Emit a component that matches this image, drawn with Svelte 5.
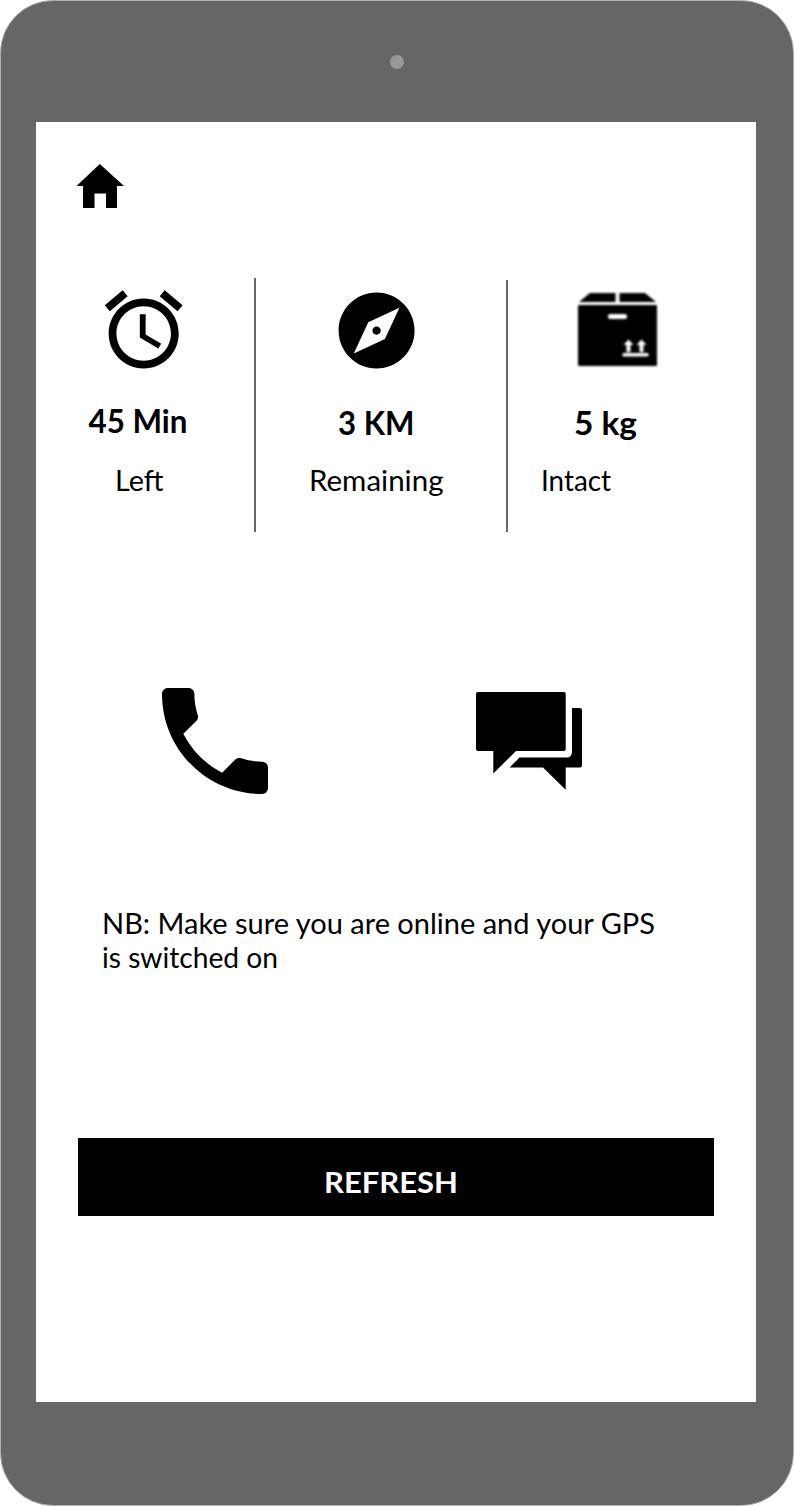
<script>
  const stats = [
    { icon: 'alarm', value: '45 Min', vx: 52.5, vw: 99, vy: 55, label: 'Left', lx: 79, lw: 48.5 },
    { icon: 'compass', value: '3 KM', vx: 82, vw: 76.5, vy: 56.5, label: 'Remaining', lx: 53, lw: 134.5 },
    { icon: 'box', value: '5 kg', vx: 66, vw: 63, vy: 56.5, label: 'Intact', lx: 33, lw: 70 }
  ];
  const note = [
    { text: 'NB: Make sure you are online and your GPS', width: 553 },
    { text: 'is switched on', width: 176 }
  ];
</script>

{#snippet line(text, x, y, width, kind)}
  <svg class="line {kind}">
    <text {x} {y} textLength={width} lengthAdjust="spacingAndGlyphs">{text}</text>
  </svg>
{/snippet}

<div class="device">
  <div class="bezel"><span class="camera"></span></div>
  <main class="screen">
    <header>
      <svg class="home" width="48" height="44" viewBox="0 0 48 44">
        <path d="M23.8 0 48 22H41V44H30V29.5H18.5V44H7V22H.5Z" />
      </svg>
    </header>

    <section class="stats">
      {#each stats as s}
        <div class="stat {s.icon}">
          {#if s.icon === 'alarm'}
            <svg class="glyph" width="93.4" height="93.4" viewBox="0 0 24 24">
              <path d="M22 5.72l-4.6-3.86-1.29 1.53 4.6 3.86L22 5.72zM7.88 3.39L6.6 1.86 2 5.71l1.29 1.53 4.59-3.85zM12.5 8H11v6l4.75 2.85.75-1.23-4-2.37V8zM12 4c-4.97 0-9 4.03-9 9s4.02 9 9 9c4.97 0 9-4.03 9-9s-4.03-9-9-9zm0 16c-3.87 0-7-3.13-7-7s3.13-7 7-7 7 3.13 7 7-3.13 7-7 7z" />
            </svg>
          {:else if s.icon === 'compass'}
            <svg class="glyph" width="91.2" height="91.2" viewBox="0 0 24 24">
              <path d="M12 10.9c-.61 0-1.1.49-1.1 1.1s.49 1.1 1.1 1.1c.61 0 1.1-.49 1.1-1.1s-.49-1.1-1.1-1.1zM12 2C6.48 2 2 6.48 2 12s4.48 10 10 10 10-4.48 10-10S17.52 2 12 2zm2.19 12.19L6 18l3.81-8.19L18 6l-3.81 8.19z" />
            </svg>
          {:else}
            <svg class="glyph soft" width="82" height="76" viewBox="0 0 82 76">
              <path d="M13 1H38.500V10H2ZM42.500 1H68L79 10H42.500Z" />
              <rect x="1" y="13" width="79" height="61" rx="1" />
              <g fill="#fff">
                <rect x="31" y="22" width="19" height="5" rx="2" />
                <path d="M51.500 47.500 56.500 53H53.500V60H49.500V53H46.500ZM64.500 47.500 69.500 53H66.500V60H62.500V53H59.500Z" />
                <rect x="45.500" y="61" width="26" height="3.500" rx="1" />
              </g>
            </svg>
          {/if}
          {@render line(s.value, s.vx, s.vy, s.vw, 'value')}
          {@render line(s.label, s.lx, 33, s.lw, 'caption')}
        </div>
      {/each}
    </section>

    <section class="contact">
      <svg class="phone" width="106" height="106" viewBox="3 3 18 18">
        <path d="M6.620 10.790c1.440 2.830 3.760 5.140 6.590 6.590l2.200-2.200c.27-.27.67-.36 1.020-.24 1.120.37 2.330.57 3.570.57.55 0 1 .45 1 1V20c0 .55-.45 1-1 1-9.390 0-17-7.610-17-17 0-.55.45-1 1-1h3.500c.55 0 1 .45 1 1 0 1.250.2 2.450.57 3.570.11.35.03.74-.25 1.020l-2.200 2.200z" />
      </svg>
      <svg class="chat" width="106" height="98" viewBox="0 0 106 98">
        <path d="M2 0H88Q89.700 0 89.700 2V57Q89.700 59 88 59H40L17.300 81.500V59H2Q0 59 0 57V2Q0 0 2 0Z" />
        <path d="M96 16H104Q106 16 106 18V73.500Q106 75.500 104 75.500H89.700V97.800L67 75.500H33.500L43.500 65.500H90.500Q96 65.500 96 59.500Z" />
      </svg>
    </section>

    <section class="note">
      {#each note as n}
        {@render line(n.text, 0, 27.5, n.width, 'body')}
      {/each}
    </section>

    <button type="button">{@render line('REFRESH', 246, 55, 134, 'action')}</button>
  </main>
</div>

<style>
  :global(body) { margin: 0; background: #fff; }
  .device {
    box-sizing: border-box;
    width: 794px;
    height: 1506px;
    padding: 0 35px;
    border: 1px solid #adb0af;
    border-radius: 53px;
    background: #666;
    font-family: Lato, "Open Sans", sans-serif;
  }
  .bezel { height: 121px; display: flex; justify-content: center; }
  .camera { width: 14px; height: 14px; margin: 53.5px 0 0; border-radius: 50%; background: #999; }
  .screen { width: 720px; height: 1280px; background: #fff; display: flex; flex-direction: column; }
  header { height: 156px; box-sizing: border-box; padding: 42px 0 0 40px; }
  svg { display: block; flex: none; }
  .stats { display: grid; grid-template-columns: 220px 252px 248px; height: 254px; }
  .stat { box-sizing: border-box; display: flex; flex-direction: column; align-items: flex-start; }
  .stat.alarm { border-right: 2px solid #666; padding-top: 4.5px; }
  .stat.compass { border-right: 2px solid #666; margin-top: 2px; padding-top: 5px; }
  .stat.box { padding-top: 13.5px; }
  .alarm .glyph { margin: 0 0 2.1px 60.6px; }
  .compass .glyph { margin: 0 0 1.8px 75px; }
  .box .glyph { margin: 0 0 10.5px 68.5px; }
  .soft { filter: blur(0.8px); }
  .line { width: 100%; overflow: visible; }
  .value { height: 80px; font-size: 33px; font-weight: 700; }
  .caption { height: 40px; font-size: 28px; }
  .contact { display: flex; align-items: flex-start; height: 218px; padding: 156px 0 0 126px; box-sizing: content-box; }
  .chat { margin: 4px 0 0 208px; }
  .note { margin: 0 0 0 66px; height: 232px; }
  .body { height: 34px; font-size: 29px; }
  button {
    width: 636px;
    height: 78px;
    margin-left: 42px;
    padding: 0;
    border: 0;
    background: #000;
    color: #fff;
    font-family: inherit;
  }
  .action { height: 78px; font-size: 29px; font-weight: 700; fill: #fff; }
</style>
